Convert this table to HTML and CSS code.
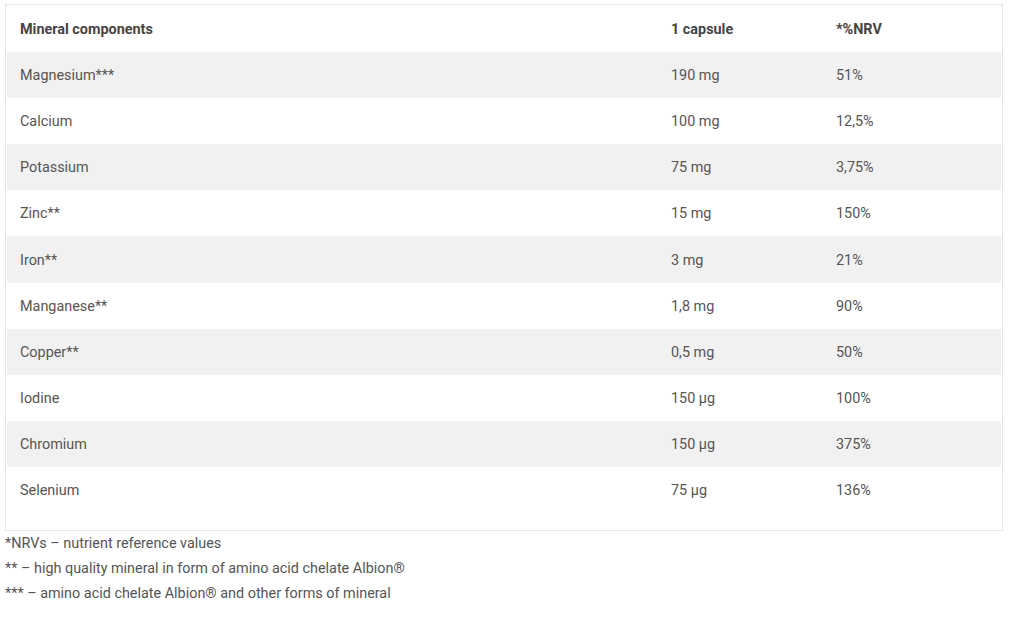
FILE: index.html
```html
<!DOCTYPE html>
<html lang="en">
<head>
<meta charset="utf-8">
<title>Mineral components</title>
<link rel="stylesheet" href="styles.css">
</head>
<body>
<div class="box">
  <table class="minerals">
    <colgroup>
      <col class="c1"><col class="c2"><col class="c3">
    </colgroup>
    <thead>
      <tr><th>Mineral components</th><th>1 capsule</th><th>*%NRV</th></tr>
    </thead>
    <tbody>
      <tr><td>Magnesium***</td><td>190 mg</td><td>51%</td></tr>
      <tr><td>Calcium</td><td>100 mg</td><td>12,5%</td></tr>
      <tr><td>Potassium</td><td>75 mg</td><td>3,75%</td></tr>
      <tr><td>Zinc**</td><td>15 mg</td><td>150%</td></tr>
      <tr><td>Iron**</td><td>3 mg</td><td>21%</td></tr>
      <tr><td>Manganese**</td><td>1,8 mg</td><td>90%</td></tr>
      <tr><td>Copper**</td><td>0,5 mg</td><td>50%</td></tr>
      <tr><td>Iodine</td><td>150 µg</td><td>100%</td></tr>
      <tr><td>Chromium</td><td>150 µg</td><td>375%</td></tr>
      <tr><td>Selenium</td><td>75 µg</td><td>136%</td></tr>
    </tbody>
  </table>
</div>
<div class="notes">
  <p>*NRVs – nutrient reference values</p>
  <p>** – high quality mineral in form of amino acid chelate Albion®</p>
  <p>*** – amino acid chelate Albion® and other forms of mineral</p>
</div>
</body>
</html>
```
FILE: styles.css
```css
html, body {
  margin: 0;
  padding: 0;
  background: #fff;
}
body {
  font-family: Roboto, "Liberation Sans", sans-serif;
  font-size: 14.4px;
  color: #555;
  padding: 4px 5px 0 5px;
  width: 998px;
}
.box {
  border: 1px solid #e6e6e6;
  padding: 1px 1px 17px 1px;
}
.minerals {
  width: 100%;
  border-collapse: collapse;
  table-layout: fixed;
}
.c1 { width: 651px; }
.c2 { width: 165px; }
.minerals th,
.minerals td {
  box-sizing: border-box;
  height: 46.1px;
  padding: 2px 0 0 13px;
  text-align: left;
  vertical-align: middle;
  line-height: 20px;
}
.minerals th {
  font-weight: 700;
  color: #444;
}
.minerals tbody tr:nth-child(odd) {
  background: #f1f1f1;
}
.notes p {
  margin: 0;
  line-height: 25px;
  color: #555;
}
```
